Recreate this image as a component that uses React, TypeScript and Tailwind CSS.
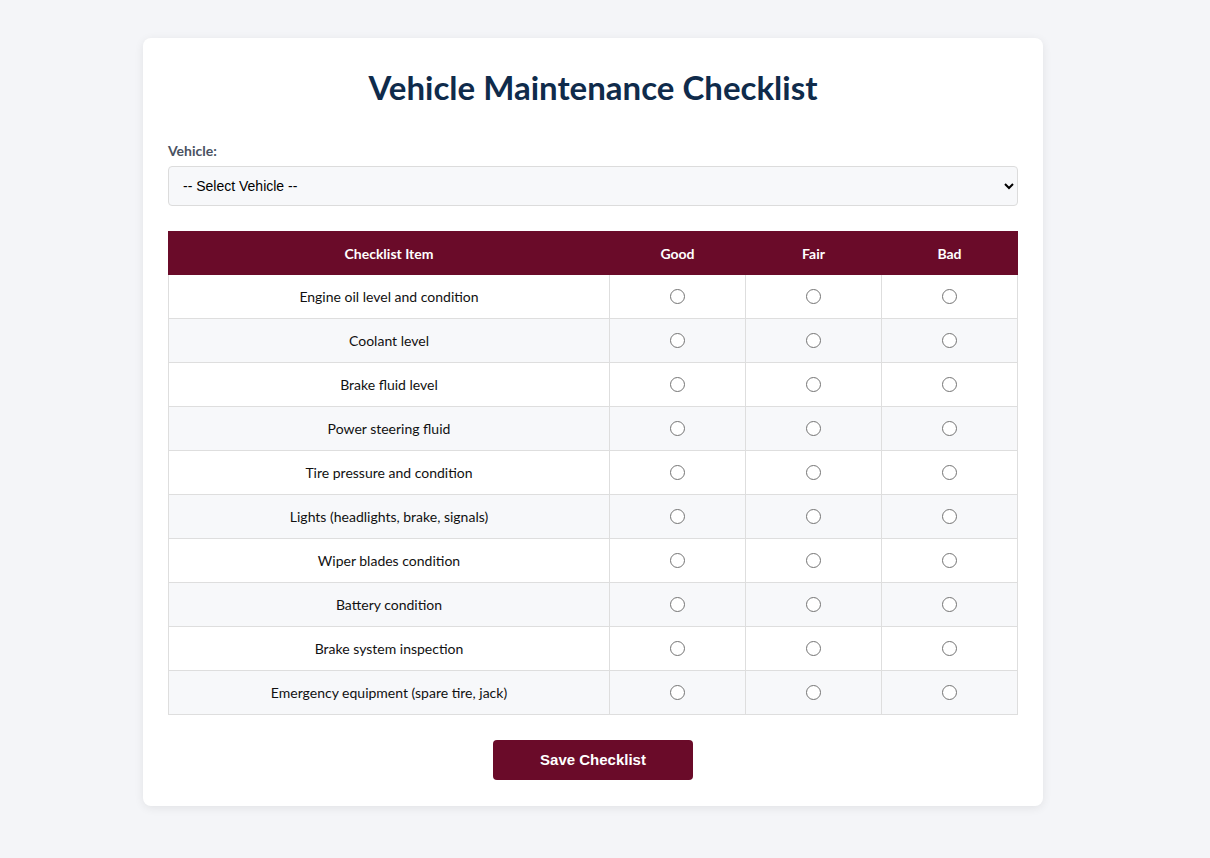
import { useState } from "react";

const items = [
  "Engine oil level and condition",
  "Coolant level",
  "Brake fluid level",
  "Power steering fluid",
  "Tire pressure and condition",
  "Lights (headlights, brake, signals)",
  "Wiper blades condition",
  "Battery condition",
  "Brake system inspection",
  "Emergency equipment (spare tire, jack)",
];

const ratings = ["Good", "Fair", "Bad"];

export default function App() {
  const [values, setValues] = useState<Record<number, string>>({});

  return (
    <div className="min-h-screen bg-[#f4f5f8] pt-[38px] pb-[40px] font-['Lato','Noto_Sans',sans-serif]">
      <div className="ml-[143px] w-[900px] rounded-lg bg-white px-[25px] pt-[25px] pb-[26px] shadow-[0_2px_10px_rgba(0,0,0,0.08)]">
        <h1 className="mt-[5px] text-center text-[33px] font-bold leading-[38px] text-[#0f2b4b]">
          Vehicle Maintenance Checklist
        </h1>

        <div className="mt-[35px]">
          <label className="block text-[14px] font-bold leading-[20px] text-[#4a5261]">Vehicle:</label>
          <select className="mt-[5px] h-[40px] w-full rounded border border-[#dcdcdc] bg-[#f7f8fa] px-[10px] font-['Liberation_Sans',Arial,sans-serif] text-[14px] text-black">
            <option>-- Select Vehicle --</option>
          </select>
        </div>

        <table className="mt-[25px] w-full table-fixed border-collapse text-[14px]">
          <colgroup>
            <col className="w-[441px]" />
            <col className="w-[136px]" />
            <col className="w-[136px]" />
            <col className="w-[136px]" />
          </colgroup>
          <thead>
            <tr className="h-[43px] bg-[#6a0b29] text-white">
              <th className="border border-[#6a0b29] font-bold">Checklist Item</th>
              {ratings.map((r) => (
                <th key={r} className="border border-[#6a0b29] font-bold">
                  {r}
                </th>
              ))}
            </tr>
          </thead>
          <tbody>
            {items.map((item, i) => (
              <tr key={item} className={`h-[44px] ${i % 2 === 1 ? "bg-[#f7f8fa]" : "bg-white"}`}>
                <td className="border border-[#dedede] text-center text-[#111]">{item}</td>
                {ratings.map((r) => (
                  <td key={r} className="border border-[#dedede] text-center">
                    <input
                      type="radio"
                      name={`item-${i}`}
                      checked={values[i] === r}
                      onChange={() => setValues({ ...values, [i]: r })}
                      className="mx-auto block h-[15px] w-[15px] appearance-none rounded-full border-[1.5px] border-[#747474] bg-white checked:border-[5px] checked:border-[#6a0b29]"
                    />
                  </td>
                ))}
              </tr>
            ))}
          </tbody>
        </table>

        <div className="mt-[25px] flex justify-center">
          <button className="h-[40px] w-[200px] rounded bg-[#6a0b29] font-['Liberation_Sans',Arial,sans-serif] text-[15px] font-bold text-white">
            Save Checklist
          </button>
        </div>
      </div>
    </div>
  );
}
